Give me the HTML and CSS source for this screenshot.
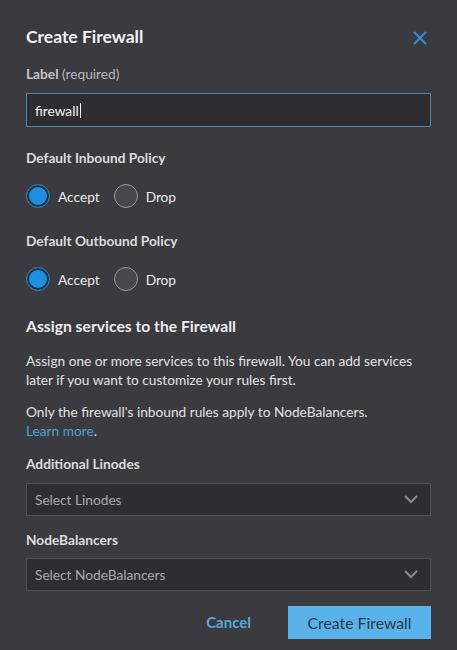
FILE: index.html
```html
<!DOCTYPE html>
<html>
<head>
<meta charset="utf-8">
<link rel="stylesheet" href="styles.css">
</head>
<body>
<div class="dialog">
  <div class="header">
    <h1 class="title">Create Firewall</h1>
    <svg class="close" width="16" height="16" viewBox="0 0 16 16"><path d="M2 2 L14 14 M14 2 L2 14" stroke="#2f8fd6" stroke-width="2" fill="none"/></svg>
  </div>
  <div class="label label-first"><b>Label</b> (required)</div>
  <div class="input"><span class="value">firewall</span><span class="caret"></span></div>

  <div class="label label-policy">Default Inbound Policy</div>
  <div class="radios">
    <span class="radio on"></span><span class="rtext">Accept</span>
    <span class="radio"></span><span class="rtext">Drop</span>
  </div>

  <div class="label label-policy2">Default Outbound Policy</div>
  <div class="radios">
    <span class="radio on"></span><span class="rtext">Accept</span>
    <span class="radio"></span><span class="rtext">Drop</span>
  </div>

  <h2 class="subtitle">Assign services to the Firewall</h2>
  <p class="para p1">Assign one or more services to this firewall. You can add services later if you want to customize your rules first.</p>
  <p class="para p2">Only the firewall's inbound rules apply to NodeBalancers.<br><a class="link">Learn more</a>.</p>

  <div class="label label-sel1">Additional Linodes</div>
  <div class="select sel1"><span>Select Linodes</span><svg width="16" height="10" viewBox="0 0 16 10"><path d="M2 2 L8 8 L14 2" stroke="#8a8a8f" stroke-width="2" fill="none"/></svg></div>

  <div class="label label-sel2">NodeBalancers</div>
  <div class="select sel2"><span>Select NodeBalancers</span><svg width="16" height="10" viewBox="0 0 16 10"><path d="M2 2 L8 8 L14 2" stroke="#8a8a8f" stroke-width="2" fill="none"/></svg></div>

  <div class="actions">
    <span class="cancel">Cancel</span>
    <span class="primary">Create Firewall</span>
  </div>
</div>
</body>
</html>
```
FILE: styles.css
```css
html, body {
  margin: 0;
  padding: 0;
  background: #3a3a3f;
}
body {
  font-family: Lato, "Open Sans", sans-serif;
  color: #e6e6e8;
  width: 457px;
  height: 650px;
  overflow: hidden;
}
.dialog {
  display: flex;
  flex-direction: column;
  padding: 26px 26px 0 26px;
}
.header {
  display: flex;
  justify-content: space-between;
  align-items: center;
  height: 22px;
}
.title {
  margin: 0;
  font-size: 17.5px;
  font-weight: 700;
  line-height: 22px;
  color: #f2f2f4;
}
.close {
  margin-right: 3px;
  margin-top: 2px;
}
.label {
  font-size: 13.7px;
  line-height: 18px;
  font-weight: 700;
  color: #dcdcde;
}
.label-first {
  margin-top: 17px;
  font-weight: 400;
  color: #b8b8bc;
}
.label-first b {
  font-weight: 700;
  color: #c4c4c8;
}
.input {
  margin-top: 10px;
  height: 32px;
  border: 1px solid #4a86ad;
  background: #2e2e32;
  display: flex;
  align-items: center;
  padding: 0 8px;
  font-size: 13.7px;
  color: #f5f5f5;
}
.caret {
  display: inline-block;
  width: 1px;
  height: 15px;
  background: #f5f5f5;
  margin-left: 1px;
}
.label-policy { margin-top: 22px; }
.label-policy2 { margin-top: 24px; }
.radios {
  display: flex;
  align-items: center;
  height: 24px;
  margin-top: 17px;
}
.radio {
  box-sizing: border-box;
  width: 24px;
  height: 24px;
  border-radius: 50%;
  border: 1.5px solid #98989d;
  background: #47474d;
}
.radio.on {
  border: 1.5px solid #2b7cb8;
  background: #1e8fe0;
  box-shadow: inset 0 0 0 2px #26313c;
}
.rtext {
  font-size: 13.7px;
  color: #ececee;
  margin-left: 8px;
  margin-right: 14px;
}
.subtitle {
  margin: 25px 0 0 0;
  font-size: 15.7px;
  line-height: 20px;
  font-weight: 700;
  color: #ececee;
}
.para {
  margin: 0;
  font-size: 13.7px;
  line-height: 18.5px;
  color: #e2e2e4;
}
.p1 { margin-top: 16px; }
.p2 { margin-top: 14px; }
.link {
  color: #4ea1d6;
}
.label-sel1 { margin-top: 14.5px; }
.label-sel2 { margin-top: 15px; }
.select {
  height: 31px;
  border: 1px solid #505055;
  background: #2e2e32;
  display: flex;
  align-items: center;
  justify-content: space-between;
  padding: 0 11px 0 8px;
  font-size: 13.7px;
  color: #a9a9ae;
}
.sel1 { margin-top: 10px; }
.sel2 { margin-top: 9px; }
.actions {
  margin-top: 15px;
  display: flex;
  justify-content: flex-end;
  align-items: center;
  gap: 37px;
}
.cancel {
  font-size: 15px;
  font-weight: 700;
  color: #55a8de;
}
.primary {
  width: 143px;
  height: 33px;
  background: #5ab2ea;
  color: #2b3947;
  font-size: 15.8px;
  display: flex;
  align-items: center;
  justify-content: center;
}
```
